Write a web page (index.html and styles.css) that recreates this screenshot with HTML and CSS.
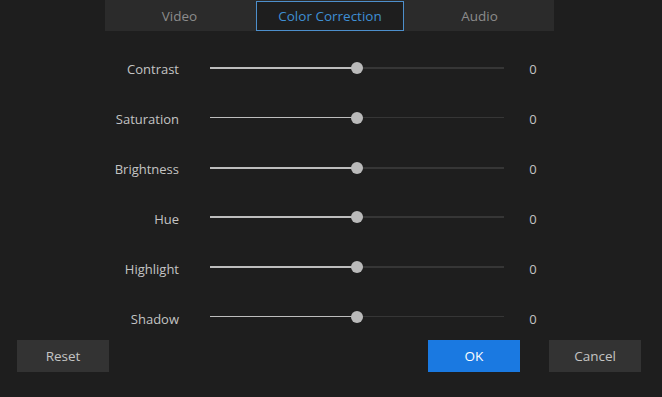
FILE: index.html
```html
<!DOCTYPE html>
<html lang="en">

<head>
    <meta charset="UTF-8">
    <meta name="viewport" content="width=device-width, initial-scale=1.0">
    <title>Color Correction</title>
    <link rel="stylesheet" href="styles.css">
</head>

<body>
    <div class="tabs">
        <div class="tab">Video</div>
        <div class="tab active">Color Correction</div>
        <div class="tab">Audio</div>
    </div>

    <div class="rows">
        <div class="row">
            <label class="name">Contrast</label>
            <div class="slider"><div class="fill"></div><div class="thumb"></div></div>
            <span class="value">0</span>
        </div>
        <div class="row">
            <label class="name">Saturation</label>
            <div class="slider thin"><div class="fill"></div><div class="thumb"></div></div>
            <span class="value">0</span>
        </div>
        <div class="row">
            <label class="name">Brightness</label>
            <div class="slider"><div class="fill"></div><div class="thumb"></div></div>
            <span class="value">0</span>
        </div>
        <div class="row">
            <label class="name">Hue</label>
            <div class="slider low"><div class="fill"></div><div class="thumb"></div></div>
            <span class="value">0</span>
        </div>
        <div class="row">
            <label class="name">Highlight</label>
            <div class="slider low"><div class="fill"></div><div class="thumb"></div></div>
            <span class="value">0</span>
        </div>
        <div class="row">
            <label class="name">Shadow</label>
            <div class="slider thin low"><div class="fill"></div><div class="thumb"></div></div>
            <span class="value">0</span>
        </div>
    </div>

    <div class="footer">
        <button class="btn">Reset</button>
        <div class="spacer"></div>
        <button class="btn btnOk">OK</button>
        <button class="btn">Cancel</button>
    </div>
</body>

</html>
```

FILE: styles.css
```css
body {
    margin: 0;
    background-color: #1e1e1e;
    font-family: "Open Sans", "Noto Sans", sans-serif;
    font-size: 13px;
    color: #c4c4c4;
}

.tabs {
    display: flex;
    margin-left: 105px;
    width: 449px;
    height: 31px;
    background-color: #2b2b2b;
}

.tab {
    flex: 1;
    display: flex;
    align-items: center;
    justify-content: center;
    color: #8c8c8c;
    font-size: 13.5px;
}

.tab.active {
    flex: none;
    width: 146px;
    margin: 1px 1px 0 2px;
    background-color: #1e1e1e;
    border: 1px solid #4d8fcc;
    color: #3f8fd4;
}

.rows {
    display: flex;
    flex-direction: column;
    gap: 26px;
    margin-top: 26px;
}

.row {
    display: flex;
    align-items: center;
    height: 24px;
}

.name {
    width: 179px;
    text-align: right;
}

.slider {
    position: relative;
    margin-left: 31px;
    width: 294px;
    height: 2px;
    margin-bottom: 3px;
    background-color: #363636;
}

.slider.low {
    margin-bottom: 5px;
}

.slider.thin {
    height: 1px;
}

.fill {
    width: 147px;
    height: 100%;
    background-color: #bdbdbd;
}

.thumb {
    position: absolute;
    left: 141px;
    top: 50%;
    width: 12px;
    height: 12px;
    margin-top: -6px;
    border-radius: 50%;
    background-color: #bababa;
}

.value {
    margin-left: 25px;
    width: 8px;
    text-align: center;
}

.footer {
    display: flex;
    gap: 29px;
    margin-top: 9px;
    padding: 0 21px 0 17px;
}

.spacer {
    flex: 1;
}

.btn {
    width: 92px;
    height: 32px;
    border: none;
    background-color: #333333;
    color: #c4c4c4;
    font-family: "Open Sans", "Noto Sans", sans-serif;
    font-size: 13.5px;
}

.btnOk {
    background-color: #1a79e1;
    color: #ffffff;
}
```
